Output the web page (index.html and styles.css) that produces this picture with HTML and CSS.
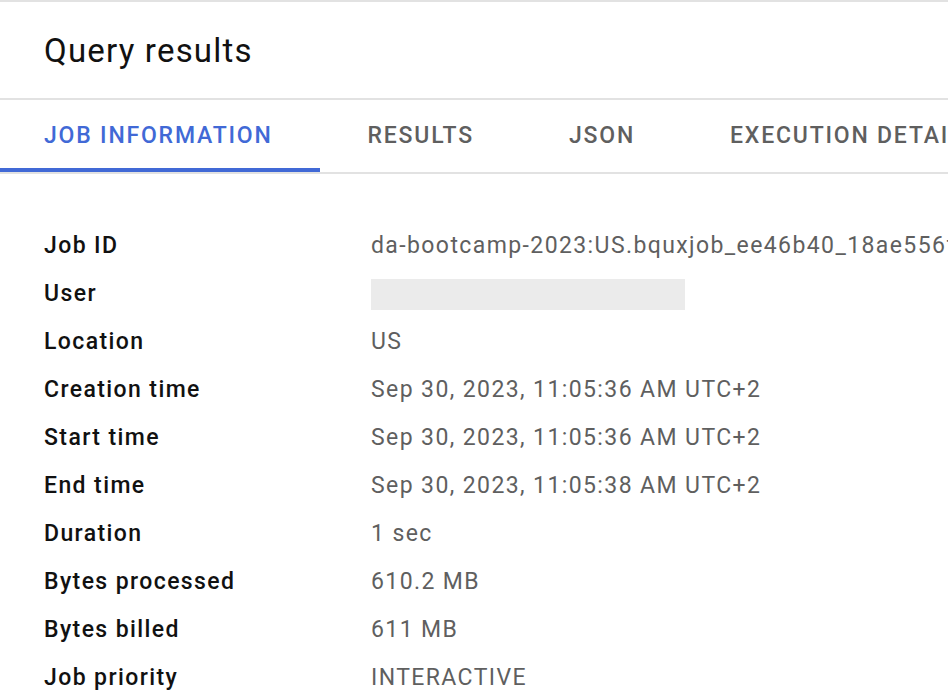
FILE: index.html
```html
<!DOCTYPE html>
<html>
<head>
<meta charset="utf-8">
<link rel="stylesheet" href="styles.css">
</head>
<body>
<div class="page">
  <header class="header"><h1 class="title">Query results</h1></header>
  <nav class="tabs">
    <div class="tab active">JOB INFORMATION</div>
    <div class="tab">RESULTS</div>
    <div class="tab">JSON</div>
    <div class="tab">EXECUTION DETAILS</div>
  </nav>
  <div class="info">
    <div class="label">Job ID</div><div class="value">da-bootcamp-2023:US.bquxjob_ee46b40_18ae556f1a3</div>
    <div class="label">User</div><div class="value"><span class="redacted"></span></div>
    <div class="label">Location</div><div class="value">US</div>
    <div class="label">Creation time</div><div class="value">Sep 30, 2023, 11:05:36 AM UTC+2</div>
    <div class="label">Start time</div><div class="value">Sep 30, 2023, 11:05:36 AM UTC+2</div>
    <div class="label">End time</div><div class="value">Sep 30, 2023, 11:05:38 AM UTC+2</div>
    <div class="label">Duration</div><div class="value">1 sec</div>
    <div class="label">Bytes processed</div><div class="value">610.2 MB</div>
    <div class="label">Bytes billed</div><div class="value">611 MB</div>
    <div class="label">Job priority</div><div class="value">INTERACTIVE</div>
  </div>
</div>
</body>
</html>
```
FILE: styles.css
```css
html, body {
  margin: 0;
  padding: 0;
  background: #fff;
}
body {
  font-family: Roboto, "Noto Sans", sans-serif;
  width: 948px;
  height: 700px;
  overflow: hidden;
}
.page {
  width: 948px;
  border-top: 2px solid #e2e2e2;
  white-space: nowrap;
  overflow: hidden;
}
.header {
  height: 96px;
  display: flex;
  align-items: center;
  padding-left: 44px;
  border-bottom: 2px solid #e2e2e2;
}
.title {
  margin: 0;
  font-size: 33px;
  font-weight: 400;
  letter-spacing: 1.2px;
  color: #111;
}
.tabs {
  display: flex;
  height: 72px;
  border-bottom: 2px solid #e2e2e2;
  overflow: hidden;
}
.tab {
  flex: none;
  padding: 2px 47px 0 48px;
  display: flex;
  align-items: center;
  font-size: 23px;
  font-weight: 500;
  color: #5f5f5f;
  letter-spacing: 1.8px;
  box-sizing: border-box;
  border-bottom: 4px solid transparent;
}
.tab.active {
  color: #4169d6;
  border-bottom-color: #4169d6;
  padding-left: 44px;
}
.info {
  display: grid;
  grid-template-columns: 327px 577px;
  padding: 48px 0 0 44px;
  font-size: 23px;
  letter-spacing: 1.4px;
  line-height: 48px;
}
.label {
  font-weight: 500;
  color: #111;
}
.value {
  color: #5f5f5f;
  display: flex;
  align-items: center;
  overflow: hidden;
}
.redacted {
  display: block;
  width: 315px;
  height: 31px;
  background: #ebebeb;
  margin-left: -1px;
}
```
